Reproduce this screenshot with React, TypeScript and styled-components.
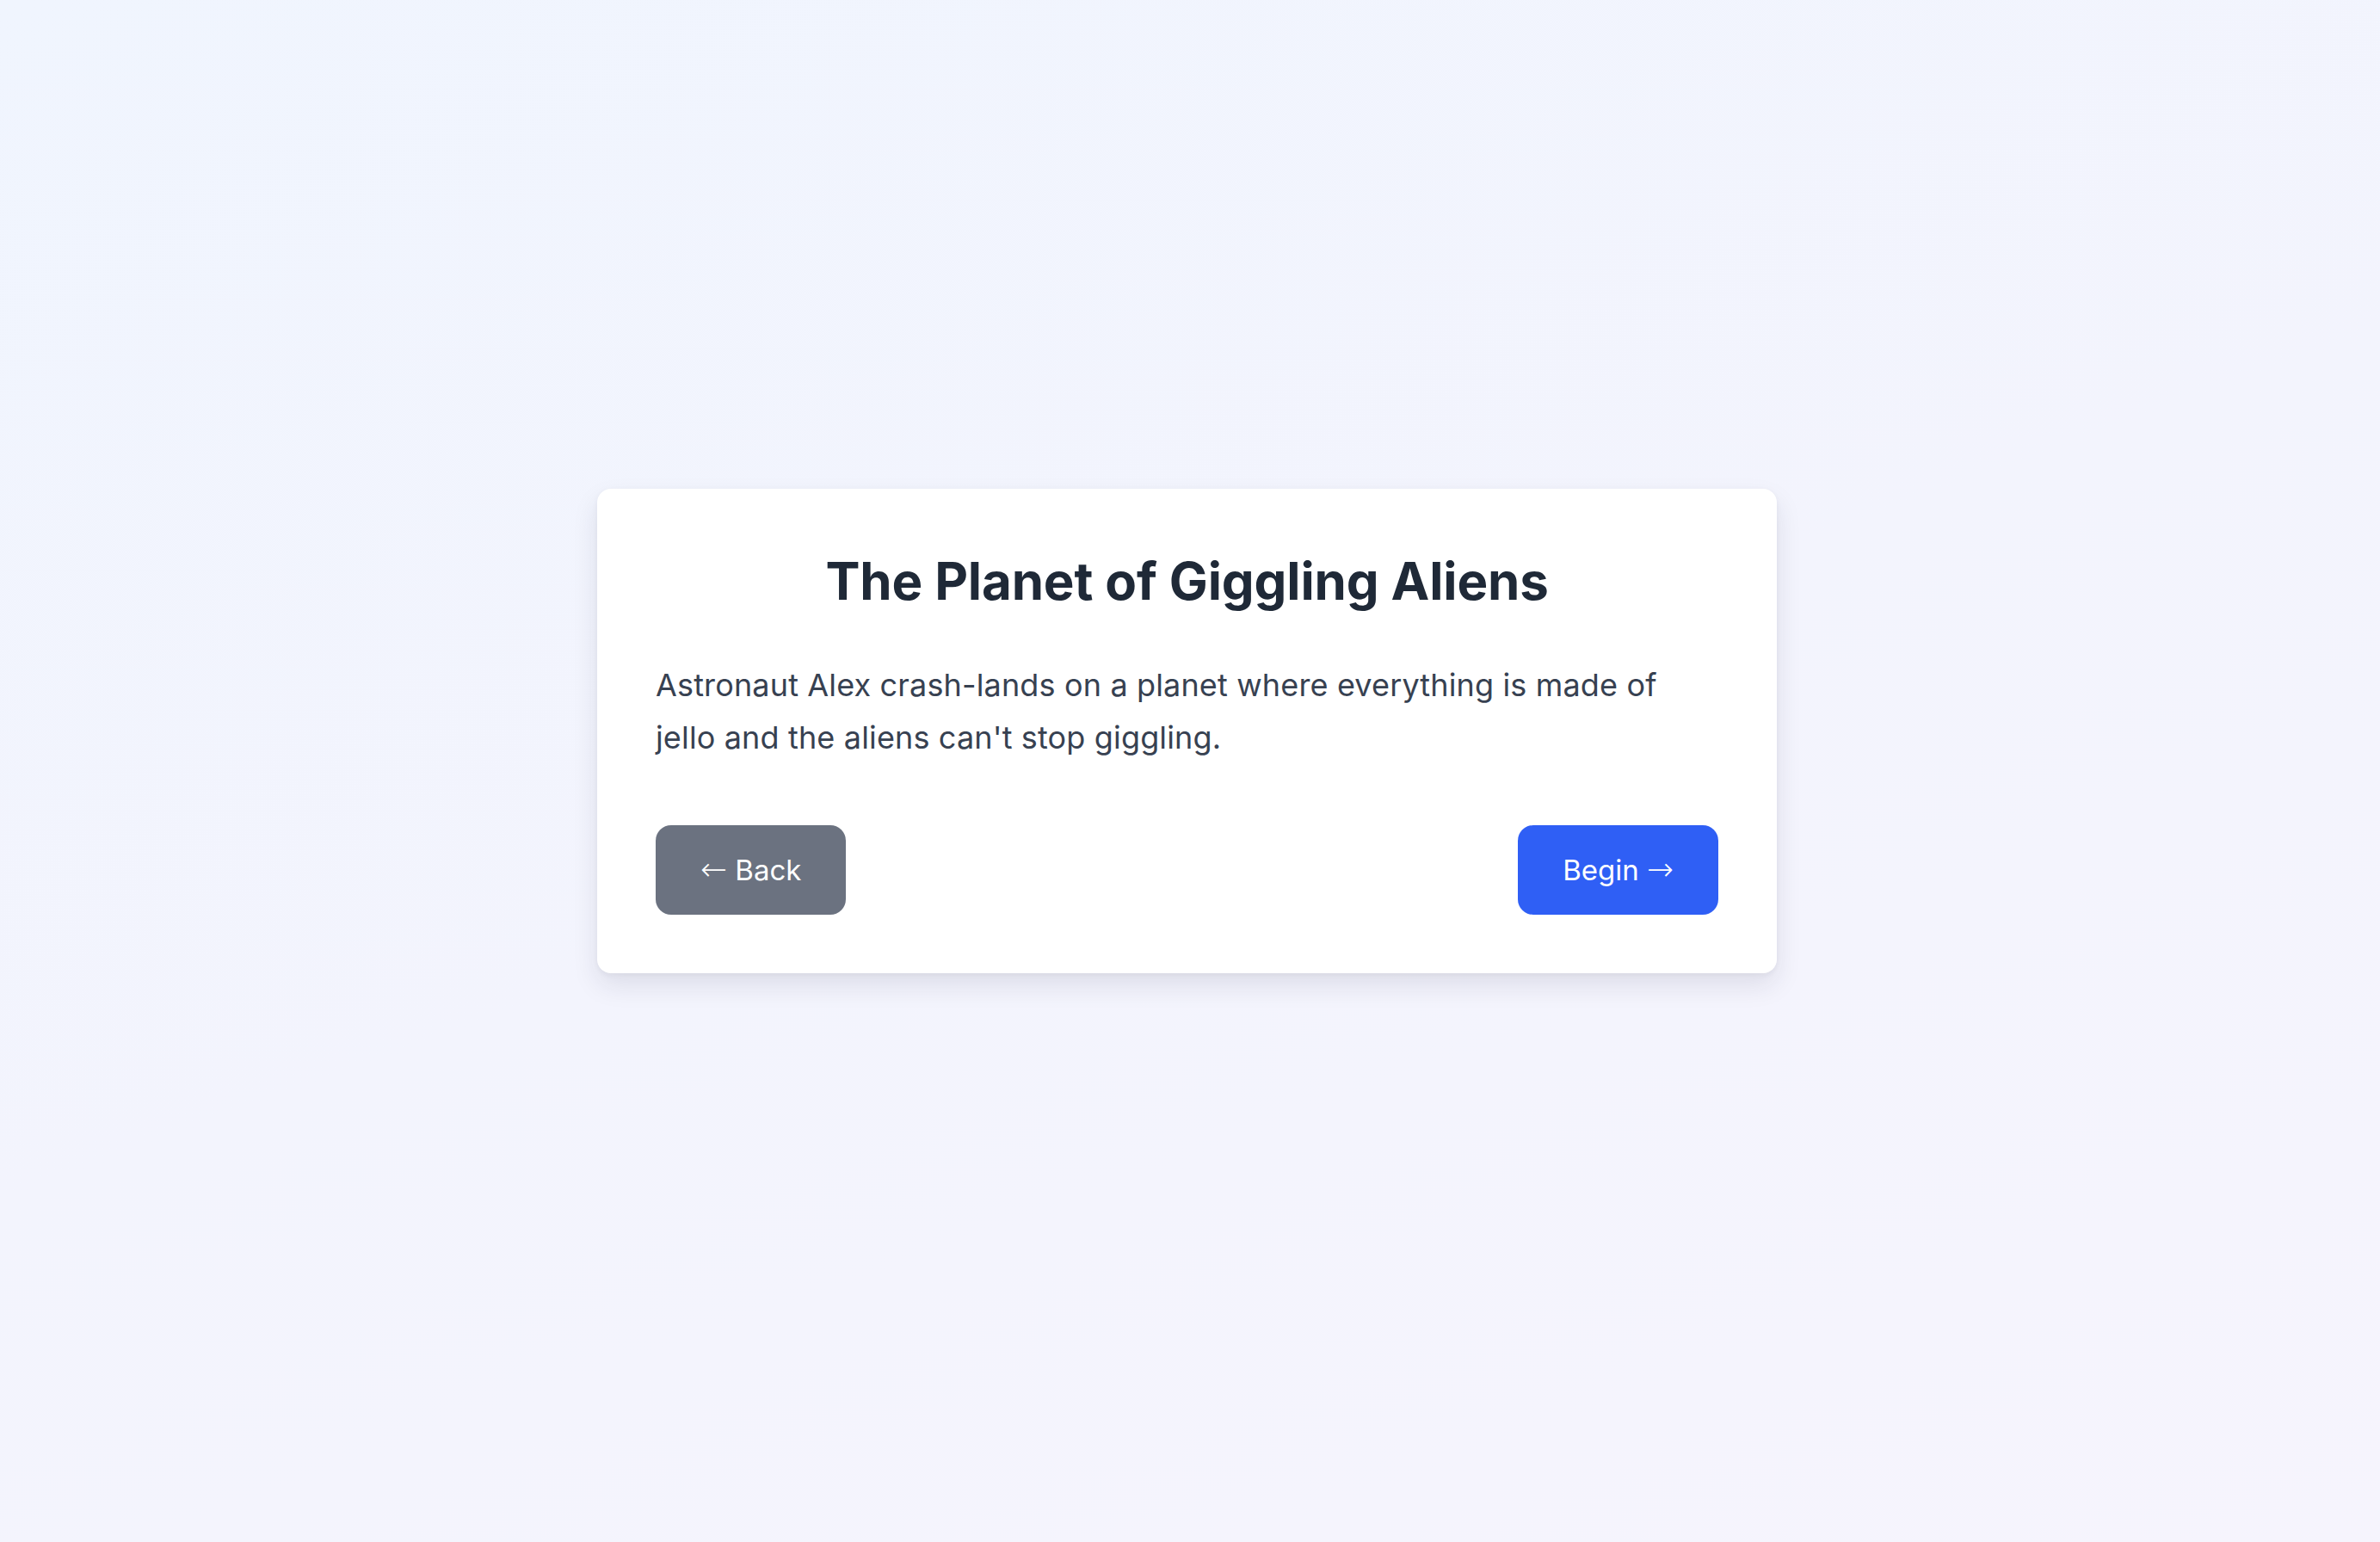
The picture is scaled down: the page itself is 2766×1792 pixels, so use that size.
import * as React from 'react';
import styled, { createGlobalStyle } from 'styled-components';

const GlobalStyle = createGlobalStyle`
  html, body {
    margin: 0;
    padding: 0;
  }
  body {
    font-family: Inter, "Noto Sans", sans-serif;
    background: linear-gradient(160deg, #f0f5fe 0%, #f3f4fd 50%, #f6f4fd 100%);
    min-height: 100vh;
  }
`;

const Page = styled.main`
  min-height: 100vh;
  box-sizing: border-box;
  display: flex;
  align-items: center;
  justify-content: center;
  padding: 0 7px 94px 0;
`;

const Card = styled.section`
  width: 1371px;
  box-sizing: border-box;
  padding: 68px;
  background: #ffffff;
  border-radius: 16px;
  box-shadow: 0 14px 30px rgba(30, 30, 60, 0.1), 0 2px 6px rgba(30, 30, 60, 0.05);
`;

const Title = styled.h1`
  margin: 0 0 52px;
  text-align: center;
  font-size: 60px;
  line-height: 78px;
  font-weight: 700;
  letter-spacing: -0.15px;
  color: #1f2937;
`;

const Story = styled.p`
  margin: 0 0 71px;
  font-size: 36px;
  line-height: 61px;
  letter-spacing: 0.15px;
  color: #374151;
`;

const Actions = styled.div`
  display: flex;
  justify-content: space-between;
  align-items: center;
`;

const Button = styled.button<{ $tone: 'muted' | 'primary' }>`
  border: none;
  border-radius: 18px;
  padding: 26px 52px;
  font-family: inherit;
  font-size: 33px;
  line-height: 51px;
  color: #ffffff;
  cursor: pointer;
  background: ${p => (p.$tone === 'primary' ? '#2f5ff5' : '#6b7280')};
`;

const Arrow = styled.span`
  font-family: "DejaVu Sans", sans-serif;
  font-weight: 200;
  font-size: 37px;
`;

export default function App() {
  return (
    <>
      <GlobalStyle />
      <Page>
        <Card>
          <Title>The Planet of Giggling Aliens</Title>
          <Story>
            Astronaut Alex crash-lands on a planet where everything is made of jello and the aliens can't stop giggling.
          </Story>
          <Actions>
            <Button $tone="muted"><Arrow>←</Arrow> Back</Button>
            <Button $tone="primary">Begin <Arrow>→</Arrow></Button>
          </Actions>
        </Card>
      </Page>
    </>
  );
}
